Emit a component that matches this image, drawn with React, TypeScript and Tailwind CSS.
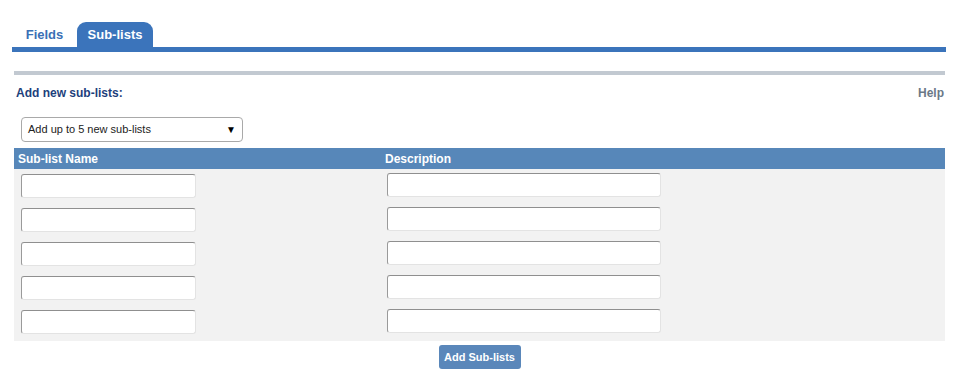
const rows = [0, 1, 2, 3, 4];

const TextBox = ({ width }: { width: string }) => (
  <input
    type="text"
    className={`${width} h-[24px] rounded-[3px] border border-[#e3e3e3] border-t-[#8f8f8f] border-l-[#9a9a9a] bg-white px-1 text-[12px] outline-none`}
  />
);

const App = () => {
  return (
    <div className="h-[389px] w-[961px] bg-white font-['Liberation_Sans',Arial,sans-serif]">
      {/* tabs */}
      <div className="pt-[22px]">
        <div className="ml-[12px] mr-[15px] flex h-[25px] items-end">
          <div className="flex h-[25px] w-[65px] items-center justify-center text-[13px] font-bold text-[#3a6fb5]">
            Fields
          </div>
          <div className="flex h-[25px] w-[76px] items-center justify-center rounded-t-[9px] bg-[#3b74bb] text-[13px] font-bold text-white">
            Sub-lists
          </div>
        </div>
        <div className="ml-[12px] mr-[15px] h-[5px] bg-[#3b74bb]" />
      </div>

      <div className="ml-[14px] mr-[16px]">
        <div className="mt-[19px] h-[4px] bg-[#c2c9d1]" />

        <div className="mt-[9px] flex items-center justify-between pl-[2px] pr-[1px] text-[12px] font-bold">
          <span className="text-[#1d3f7c]">Add new sub-lists:</span>
          <span className="text-[#6b7987]">Help</span>
        </div>

        {/* select */}
        <div className="mt-[15px] ml-[7px] flex h-[25px] w-[222px] items-center justify-between rounded-[4px] border border-[#a9a9a9] bg-white pl-[6px] pr-[6px] text-[11px] text-[#222]">
          <span>Add up to 5 new sub-lists</span>
          <span className="text-[10px] text-black">▼</span>
        </div>

        {/* table */}
        <div className="mt-[6px]">
          <div className="flex h-[21px] items-center bg-[#5787b9] text-[12px] font-bold text-white">
            <div className="w-[371px] pl-[4px]">Sub-list Name</div>
            <div>Description</div>
          </div>
          <div className="flex flex-col gap-[10px] bg-[#f2f2f2] pb-[8px] pt-[4px]">
            {rows.map((r) => (
              <div key={r} className="flex h-[24px]">
                <div className="w-[373px] pl-[7px]">
                  <TextBox width="w-[175px]" />
                </div>
                <TextBox width="w-[274px]" />
              </div>
            ))}
          </div>
        </div>

        <div className="mt-[4px] flex justify-center">
          <button className="h-[24px] w-[82px] rounded-[3px] bg-[#5a87ba] text-[11px] font-bold text-white">
            Add Sub-lists
          </button>
        </div>
      </div>
    </div>
  );
};

export default App;
